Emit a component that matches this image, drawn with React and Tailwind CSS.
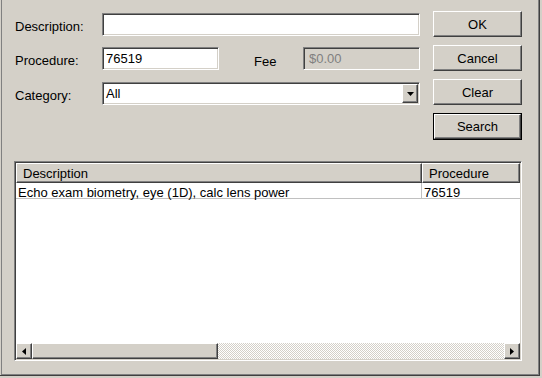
import React from 'react';

const sunken =
  'border border-t-[#808080] border-l-[#808080] border-b-white border-r-white shadow-[inset_1px_1px_0_#404040,inset_-1px_-1px_0_#d4d0c8]';
const raised =
  'border border-t-white border-l-white border-b-[#404040] border-r-[#404040] shadow-[inset_-1px_-1px_0_#808080] bg-[#d4d0c8]';

const Button = ({ label, isDefault }) => {
  if (isDefault) {
    return (
      <div className="h-[27px] w-[89px] border border-black">
        <div className={`${raised} h-full w-full flex items-center justify-center`}>{label}</div>
      </div>
    );
  }
  return (
    <div className={`${raised} h-[26px] w-[89px] flex items-center justify-center`}>{label}</div>
  );
};

const Arrow = ({ dir }) => {
  if (dir === 'down') {
    return (
      <svg width="7" height="4" viewBox="0 0 7 4">
        <path d="M0 0h7L3.5 4z" fill="#000" />
      </svg>
    );
  }
  return (
    <svg width="4" height="7" viewBox="0 0 4 7">
      {dir === 'left' ? <path d="M4 0v7L0 3.5z" fill="#000" /> : <path d="M0 0v7l4-3.5z" fill="#000" />}
    </svg>
  );
};

export default function App() {
  return (
    <div className="w-[542px] h-[378px] bg-[#d4d0c8] font-['Liberation_Sans',Arial,sans-serif] text-[13px] text-black leading-none">
      <div className="w-[540px] h-[376px] border-r border-b border-[#404040]">
        <div className="h-full ml-[1px] border-l border-r border-b border-[#808080]">
          {/* formulario + botones */}
          <div className="h-[161px] flex pl-[12px]">
            <div className="w-[406px]">
              <div className="mt-[13px] h-[23px] flex items-center">
                <span className="w-[88px] pt-[3px] pl-[1px]">Description:</span>
                <div className={`${sunken} w-[318px] h-full bg-white`} />
              </div>
              <div className="mt-[11px] h-[23px] flex items-center">
                <span className="w-[88px] pt-[3px] pl-[1px]">Procedure:</span>
                <div className={`${sunken} w-[117px] h-full bg-white flex items-center pl-[3px]`}>76519</div>
                <span className="ml-[35px] w-[49px] pt-[5px]">Fee</span>
                <div className={`${sunken} w-[117px] h-full flex items-center pl-[5px] text-[#808080]`}>$0.00</div>
              </div>
              <div className="mt-[12px] h-[23px] flex items-center">
                <span className="w-[88px] pt-[3px] pl-[1px]">Category:</span>
                <div className={`${sunken} w-[318px] h-full bg-white flex items-center p-[1px]`}>
                  <span className="flex-1 pl-[2px]">All</span>
                  <div className={`${raised} w-[16px] h-full flex items-center justify-center`}>
                    <Arrow dir="down" />
                  </div>
                </div>
              </div>
            </div>
            <div className="ml-[13px] mt-[11px] flex flex-col gap-[8px]">
              <Button label="OK" />
              <Button label="Cancel" />
              <Button label="Clear" />
              <Button label="Search" isDefault />
            </div>
          </div>

          {/* lista de resultados */}
          <div className={`${sunken} ml-[12px] w-[508px] h-[200px] bg-white flex flex-col p-[1px]`}>
            <div className="h-[20px] flex">
              <div className={`${raised} w-[406px] h-full flex items-center pl-[6px] pt-[1px]`}>Description</div>
              <div className={`${raised} w-[98px] h-full flex items-center pl-[6px] pt-[1px]`}>Procedure</div>
            </div>
            <div className="flex-1">
              <div className="h-[16px] flex border-b border-[#c0c0c0]">
                <div className="w-[406px] pl-[2px] pt-[3px] border-r border-[#c0c0c0]">
                  Echo exam biometry, eye (1D), calc lens power
                </div>
                <div className="w-[98px] pl-[2px] pt-[3px]">76519</div>
              </div>
            </div>
            <div className="h-[16px] flex">
              <div className={`${raised} w-[16px] h-full flex items-center justify-center`}>
                <Arrow dir="left" />
              </div>
              <div className={`${raised} w-[186px] h-full`} />
              <div className="flex-1 h-full bg-[conic-gradient(#d4d0c8_25%,#fff_0_50%,#d4d0c8_0_75%,#fff_0)] bg-[length:2px_2px]" />
              <div className={`${raised} w-[16px] h-full flex items-center justify-center`}>
                <Arrow dir="right" />
              </div>
            </div>
          </div>
        </div>
      </div>
    </div>
  );
}
